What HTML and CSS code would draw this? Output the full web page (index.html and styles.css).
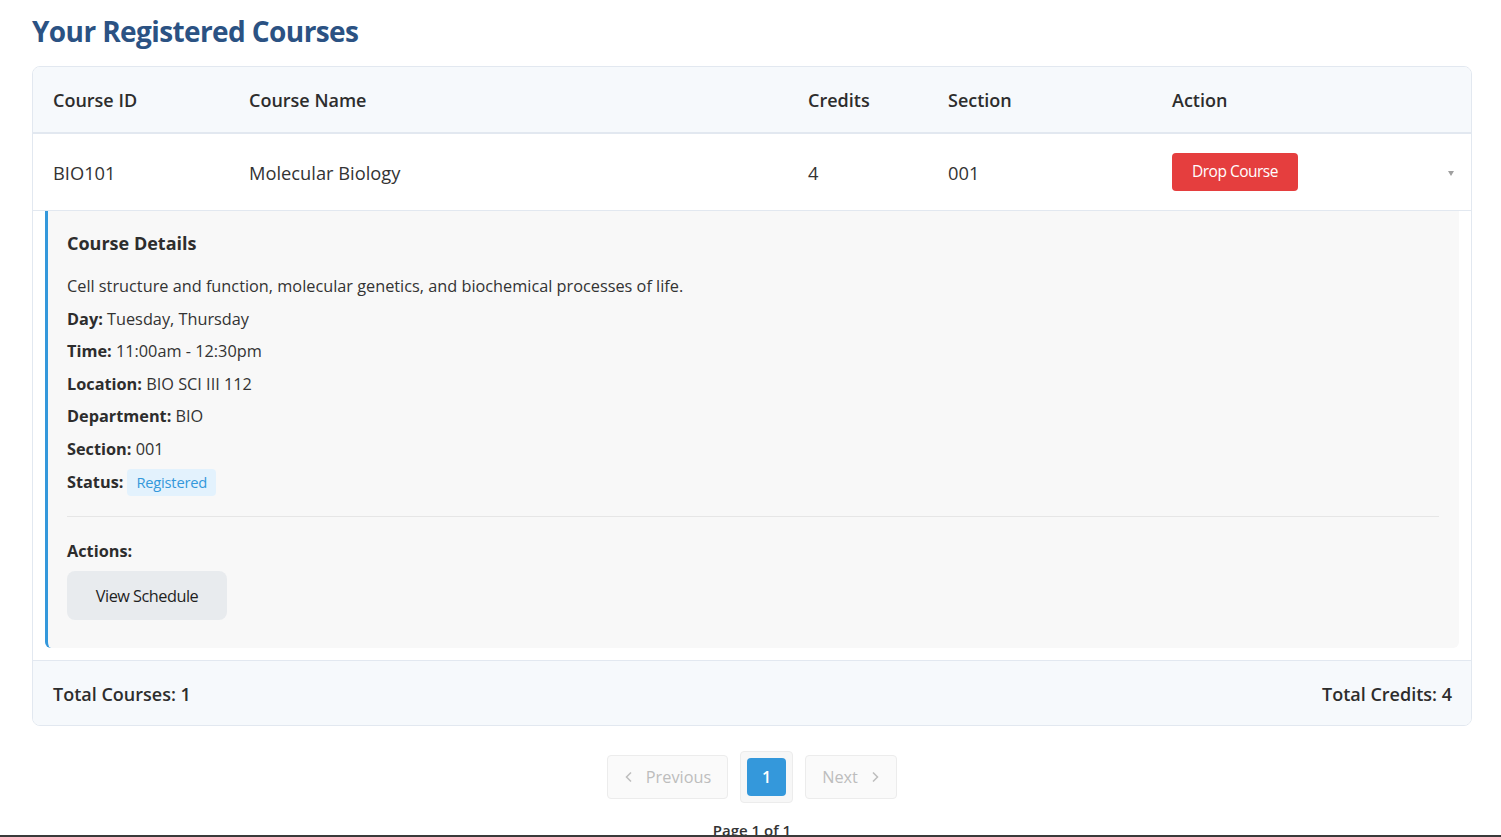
FILE: index.html
```html
<!DOCTYPE html>
<html lang="en">
<head>
<meta charset="utf-8">
<title>Your Registered Courses</title>
<link rel="stylesheet" href="styles.css">
</head>
<body>
<main class="page">
  <h1 class="page-title">Your Registered Courses</h1>

  <section class="card">
    <div class="grid-row head">
      <div class="cell">Course ID</div>
      <div class="cell">Course Name</div>
      <div class="cell">Credits</div>
      <div class="cell">Section</div>
      <div class="cell">Action</div>
    </div>

    <div class="grid-row course">
      <div class="cell">BIO101</div>
      <div class="cell">Molecular Biology</div>
      <div class="cell">4</div>
      <div class="cell">001</div>
      <div class="cell action-cell">
        <button class="btn-drop" type="button">Drop Course</button>
        <span class="caret"></span>
      </div>
    </div>

    <div class="details">
      <h3 class="details-title">Course Details</h3>
      <p class="line">Cell structure and function, molecular genetics, and biochemical processes of life.</p>
      <p class="line"><b>Day:</b> Tuesday, Thursday</p>
      <p class="line"><b>Time:</b> 11:00am - 12:30pm</p>
      <p class="line"><b>Location:</b> BIO SCI III 112</p>
      <p class="line"><b>Department:</b> BIO</p>
      <p class="line"><b>Section:</b> 001</p>
      <p class="line status"><b>Status:</b> <span class="badge">Registered</span></p>
      <div class="actions">
        <div class="actions-label">Actions:</div>
        <button class="btn-schedule" type="button">View Schedule</button>
      </div>
    </div>

    <div class="totals">
      <span>Total Courses: 1</span>
      <span>Total Credits: 4</span>
    </div>
  </section>

  <nav class="pager">
    <button class="pg-btn pg-prev" type="button" disabled>
      <svg class="chev" width="10" height="12" viewBox="0 0 10 12"><path d="M7 1.5 L2.5 6 L7 10.5" fill="none" stroke="currentColor" stroke-width="1.5"/></svg>
      Previous
    </button>
    <div class="pg-current"><span class="pg-num">1</span></div>
    <button class="pg-btn pg-next" type="button" disabled>
      Next
      <svg class="chev" width="10" height="12" viewBox="0 0 10 12"><path d="M3 1.5 L7.5 6 L3 10.5" fill="none" stroke="currentColor" stroke-width="1.5"/></svg>
    </button>
  </nav>
  <p class="page-info">Page 1 of 1</p>
</main>
<div class="bottom-bar"></div>
</body>
</html>
```

FILE: styles.css
```css
* { box-sizing: border-box; }

html, body {
  margin: 0;
  padding: 0;
  background: #ffffff;
}

body {
  font-family: "Open Sans", "Noto Sans", "DejaVu Sans", sans-serif;
  color: #333333;
  overflow: hidden;
}

.page {
  padding: 14px 29px 0 32px;
}

.page-title {
  margin: 0 0 18px;
  font-size: 28px;
  line-height: 34px;
  font-weight: 700;
  color: #2b5283;
  letter-spacing: -0.6px;
}

.card {
  border: 1px solid #e2e8f0;
  border-radius: 8px;
  overflow: hidden;
  background: #ffffff;
}

.grid-row {
  display: grid;
  grid-template-columns: 196px 559px 140px 224px 1fr;
  align-items: center;
}

.cell {
  padding-left: 20px;
}

.head {
  height: 67px;
  background: #f6f9fc;
  border-bottom: 2px solid #e2e8f0;
  font-size: 18px;
  font-weight: 600;
  color: #2d2d2d;
}

.course {
  height: 77px;
  border-bottom: 1px solid #e2e8f0;
  font-size: 18.3px;
  color: #333333;
}

.action-cell {
  display: flex;
  align-items: center;
  justify-content: space-between;
  padding-right: 17px;
}

.btn-drop {
  font-family: "Open Sans", "Noto Sans", sans-serif;
  height: 38px;
  width: 126px;
  padding: 0 0 2px;
  border: none;
  border-radius: 4px;
  background: #e53e3e;
  color: #ffffff;
  font-size: 15.5px;
  letter-spacing: -0.5px;
}

.caret {
  width: 0;
  height: 0;
  border-left: 3px solid transparent;
  border-right: 3px solid transparent;
  border-top: 5px solid #a0a0a0;
  margin-top: 2px;
}

.details {
  margin: 0 12px 12px;
  padding: 20px 20px 28px 19px;
  background: #f8f8f8;
  border-left: 3px solid #3498db;
  border-radius: 0 0 6px 6px;
  font-size: 16.3px;
}

.details-title {
  margin: 0 0 19px;
  font-size: 18px;
  line-height: 24px;
  font-weight: 700;
  color: #2d2d2d;
}

.line {
  margin: 0 0 8px;
  line-height: 24.5px;
}

.line b {
  font-weight: 700;
  color: #2d2d2d;
}

.status {
  display: flex;
  align-items: center;
  gap: 4px;
  margin: 0;
}

.badge {
  display: inline-block;
  padding: 0 9px;
  height: 27px;
  line-height: 27px;
  background: #e3f2fd;
  color: #3498db;
  border-radius: 4px;
  font-size: 14.7px;
  letter-spacing: -0.2px;
}

.actions {
  margin-top: 20px;
  border-top: 1px solid #e6e6e6;
  padding-top: 22px;
}

.actions-label {
  font-weight: 700;
  line-height: 24px;
  color: #2d2d2d;
  margin-bottom: 8px;
}

.btn-schedule {
  font-family: "Open Sans", "Noto Sans", sans-serif;
  width: 160px;
  height: 49px;
  padding: 0;
  border: none;
  border-radius: 8px;
  background: #e8ebee;
  color: #1f1f1f;
  font-size: 16.3px;
  letter-spacing: -0.5px;
}

.totals {
  display: flex;
  justify-content: space-between;
  align-items: center;
  height: 65px;
  padding: 1px 19px 0 20px;
  background: #f6f9fc;
  border-top: 1px solid #e2e8f0;
  font-size: 18px;
  font-weight: 600;
  color: #2d2d2d;
}

.pager {
  margin-top: 25px;
  display: flex;
  justify-content: center;
  align-items: center;
  gap: 12px;
}

.pg-btn {
  font-family: "Open Sans", "Noto Sans", sans-serif;
  display: inline-flex;
  align-items: center;
  justify-content: center;
  gap: 12px;
  height: 44px;
  padding: 0;
  border: 1px solid #ececec;
  border-radius: 4px;
  background: #fafafa;
  color: #bdbdbd;
  font-size: 16.3px;
}

.pg-prev {
  width: 121px;
}

.pg-next {
  width: 92px;
}

.pg-current {
  padding: 6px;
  border: 1px solid #ececec;
  border-radius: 4px;
  background: #f7f7f7;
}

.pg-num {
  display: flex;
  align-items: center;
  justify-content: center;
  width: 39px;
  height: 38px;
  border-radius: 4px;
  background: #3498db;
  color: #ffffff;
  font-size: 16px;
  font-weight: 600;
}

.page-info {
  margin: 16px 0 0;
  text-align: center;
  font-size: 15px;
  font-weight: 600;
  line-height: 22px;
  color: #333333;
}

.bottom-bar {
  position: fixed;
  left: 0;
  right: 0;
  bottom: 0;
  height: 2px;
  background: #3a3a3a;
}
```
